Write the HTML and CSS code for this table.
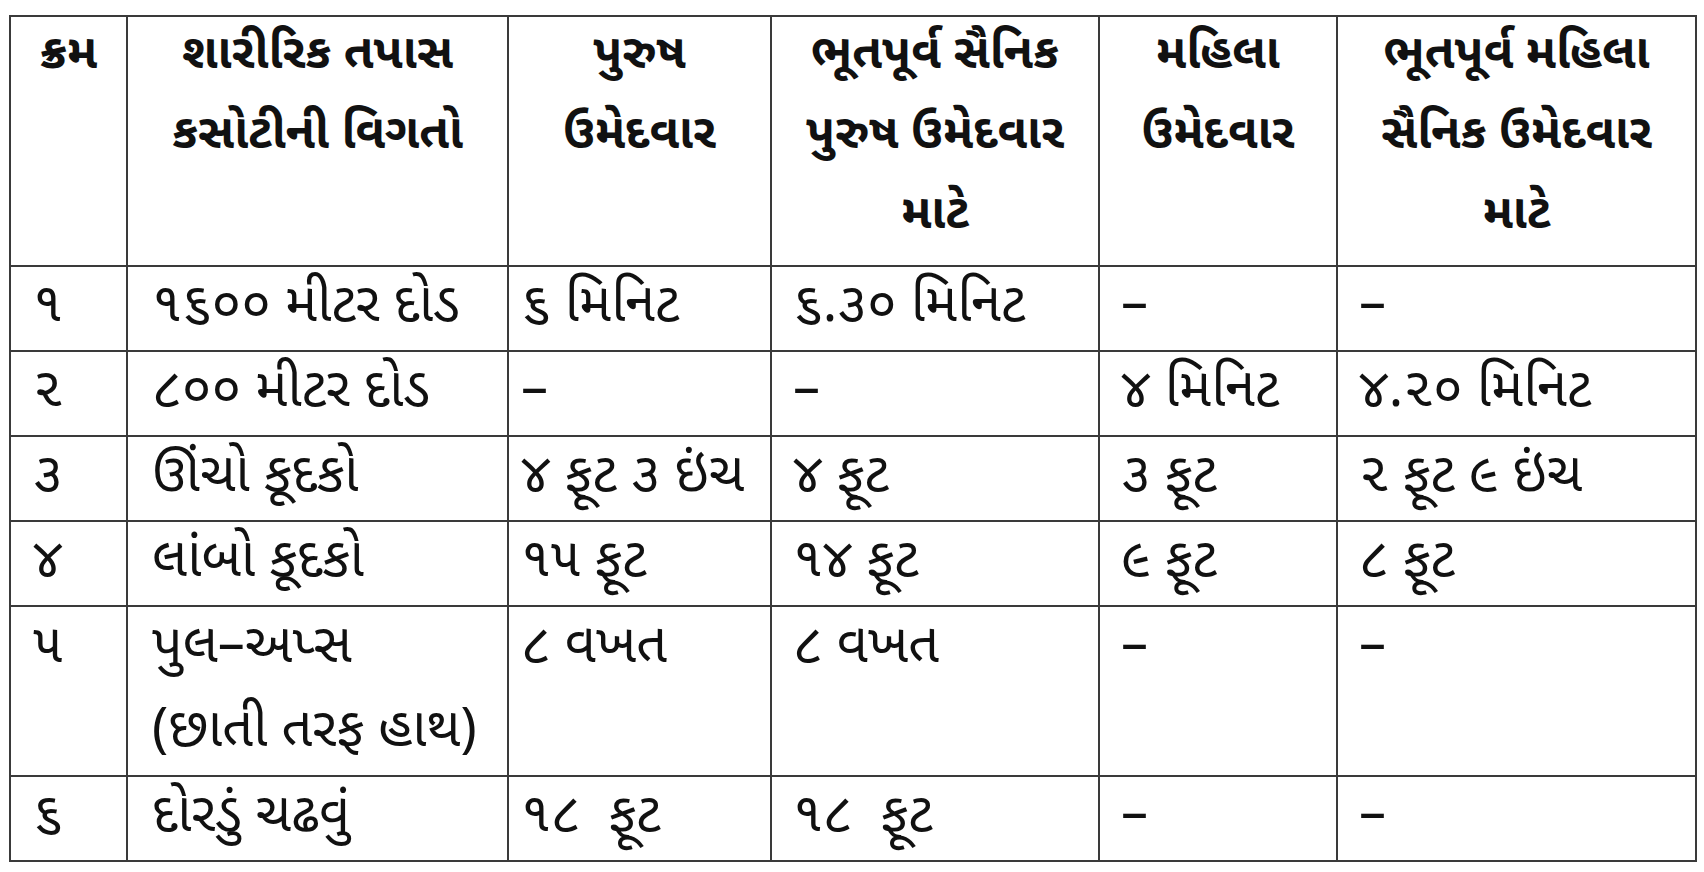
FILE: index.html
```html
<!DOCTYPE html>
<html lang="gu">
<head>
<meta charset="utf-8">
<title>શારીરિક તપાસ કસોટી</title>
<link rel="stylesheet" href="styles.css">
</head>
<body>
<table class="grid">
  <colgroup>
    <col class="c1"><col class="c2"><col class="c3"><col class="c4"><col class="c5"><col class="c6">
  </colgroup>
  <thead>
    <tr class="head">
      <th>ક્રમ</th>
      <th>શારીરિક તપાસ<br>કસોટીની વિગતો</th>
      <th>પુરુષ<br>ઉમેદવાર</th>
      <th>ભૂતપૂર્વ સૈનિક<br>પુરુષ ઉમેદવાર<br>માટે</th>
      <th>મહિલા<br>ઉમેદવાર</th>
      <th>ભૂતપૂર્વ મહિલા<br>સૈનિક ઉમેદવાર<br>માટે</th>
    </tr>
  </thead>
  <tbody>
    <tr><td>૧</td><td>૧૬૦૦ મીટર દોડ</td><td>૬ મિનિટ</td><td>૬.૩૦ મિનિટ</td><td>–</td><td>–</td></tr>
    <tr><td>૨</td><td>૮૦૦ મીટર દોડ</td><td>–</td><td>–</td><td>૪ મિનિટ</td><td>૪.૨૦ મિનિટ</td></tr>
    <tr><td>૩</td><td>ઊંચો કૂદકો</td><td>૪ ફૂટ ૩ ઇંચ</td><td>૪ ફૂટ</td><td>૩ ફૂટ</td><td>૨ ફૂટ ૯ ઇંચ</td></tr>
    <tr><td>૪</td><td>લાંબો કૂદકો</td><td>૧૫ ફૂટ</td><td>૧૪ ફૂટ</td><td>૯ ફૂટ</td><td>૮ ફૂટ</td></tr>
    <tr class="tall"><td>૫</td><td>પુલ–અપ્સ<br>(છાતી તરફ હાથ)</td><td>૮ વખત</td><td>૮ વખત</td><td>–</td><td>–</td></tr>
    <tr><td>૬</td><td>દોરડું ચઢવું</td><td>૧૮&nbsp; ફૂટ</td><td>૧૮&nbsp; ફૂટ</td><td>–</td><td>–</td></tr>
  </tbody>
</table>
</body>
</html>
```

FILE: styles.css
```css
html, body {
  margin: 0;
  background: #ffffff;
}
body {
  padding: 15px 0 0 9px;
  font-family: "Noto Sans Gujarati", "Lohit Gujarati", "Shruti", "Noto Sans", "DejaVu Sans", sans-serif;
  color: #111;
}
.grid {
  border-collapse: collapse;
  table-layout: fixed;
  width: 1686px;
}
.c1 { width: 117px; }
.c2 { width: 381px; }
.c3 { width: 263px; }
.c4 { width: 328px; }
.c5 { width: 238px; }
.c6 { width: 359px; }
.grid th, .grid td {
  border: 2px solid #3a3a3a;
  vertical-align: top;
  padding: 0;
}
.grid th {
  height: 248px;
  font-size: 48px;
  line-height: 80px;
  font-weight: 700;
  text-align: center;
  white-space: nowrap;
}
.grid td {
  font-size: 54px;
  line-height: 83px;
  font-weight: 400;
  text-align: left;
  padding-left: 21px;
  white-space: nowrap;
}
.grid td:nth-child(1) {
  padding-left: 22px;
}
.grid td:nth-child(2) {
  padding-left: 24px;
}
.grid td:nth-child(3) {
  padding-left: 12px;
}
.grid tr.tall td {
  line-height: 84px;
}
```
